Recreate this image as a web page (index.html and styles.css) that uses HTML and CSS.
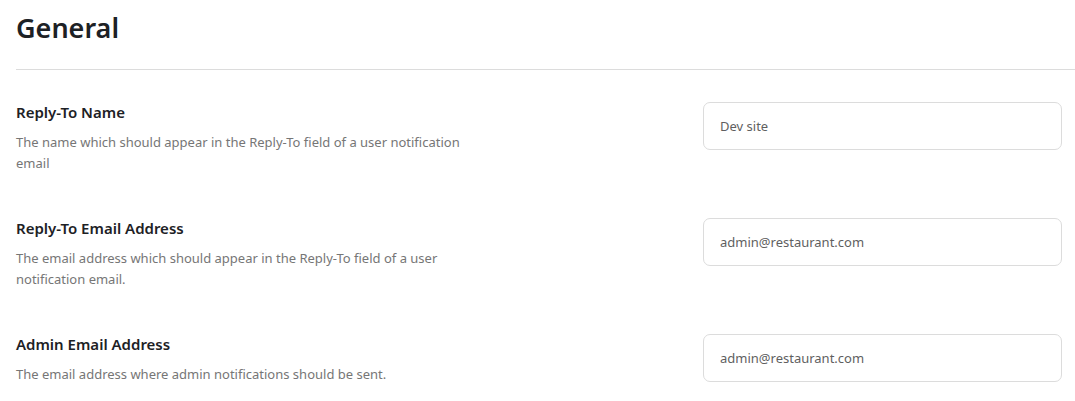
FILE: index.html
```html
<!DOCTYPE html>
<html lang="en">
<head>
<meta charset="utf-8">
<title>General</title>
<link rel="stylesheet" href="styles.css">
</head>
<body>
<div class="page">
  <header class="header">
    <h1 class="title">General</h1>
  </header>
  <div class="settings">
    <div class="row">
      <div class="info">
        <div class="label">Reply-To Name</div>
        <p class="desc">The name which should appear in the Reply-To field of a user notification email</p>
      </div>
      <div class="field"><input class="input" type="text" value="Dev site"></div>
    </div>
    <div class="row">
      <div class="info">
        <div class="label">Reply-To Email Address</div>
        <p class="desc">The email address which should appear in the Reply-To field of a user notification email.</p>
      </div>
      <div class="field"><input class="input" type="text" value="admin@restaurant.com"></div>
    </div>
    <div class="row">
      <div class="info">
        <div class="label">Admin Email Address</div>
        <p class="desc">The email address where admin notifications should be sent.</p>
      </div>
      <div class="field"><input class="input" type="text" value="admin@restaurant.com"></div>
    </div>
  </div>
</div>
</body>
</html>
```
FILE: styles.css
```css
html, body {
  margin: 0;
  padding: 0;
  background: #ffffff;
}
body {
  font-family: "Noto Sans", "Open Sans", sans-serif;
  color: #1f2328;
}
.page {
  padding-left: 16px;
}
.header {
  border-bottom: 1px solid #dcdcdc;
  padding-top: 10px;
  height: 70px;
  box-sizing: border-box;
}
.title {
  margin: 0;
  font-size: 27px;
  line-height: 36px;
  font-weight: 600;
  color: #1d2125;
}
.settings {
  padding-top: 32px;
  padding-right: 13px;
}
.row {
  display: flex;
  justify-content: space-between;
  align-items: flex-start;
  margin-bottom: 44px;
}
.row:last-child {
  margin-bottom: 0;
}
.info {
  width: 470px;
}
.label {
  font-size: 15px;
  line-height: 20px;
  font-weight: 600;
  color: #1d2125;
}
.desc {
  margin: 10px 0 0;
  font-size: 13px;
  line-height: 21px;
  color: #767676;
}
.field {
  width: 359px;
}
.input {
  display: block;
  box-sizing: border-box;
  width: 100%;
  height: 48px;
  border: 1px solid #dcdcdc;
  border-radius: 7px;
  padding: 0 16px;
  font-family: "Noto Sans", "Open Sans", sans-serif;
  font-size: 13px;
  color: #5f5f5f;
  background: #fff;
  outline: none;
}
```
